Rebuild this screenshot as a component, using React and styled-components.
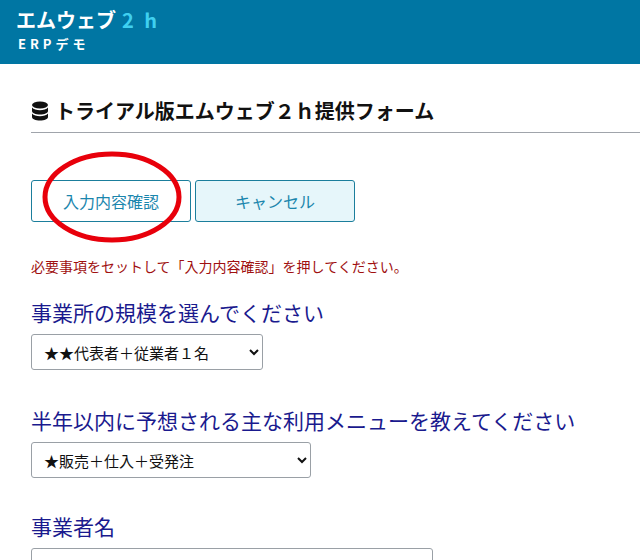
import React from "react";
import styled, { createGlobalStyle } from "styled-components";

const G = createGlobalStyle`
  body { margin:0; font-family: "Noto Sans CJK JP", "Liberation Sans", sans-serif; background:#fff; overflow:hidden; }
`;
const Header = styled.header`
  background:#0076a3; height:64px; padding:6px 16px 0; box-sizing:border-box; color:#fff;
`;
const Title = styled.div`font-size:20px; font-weight:700; line-height:28px;`;
const Cyan = styled.span`color:#3fd0f0; margin-left:6px; letter-spacing:3px;`;
const Sub = styled.div`font-size:13px; font-weight:700; letter-spacing:4px; line-height:20px; margin-left:2px;`;
const Main = styled.main`padding:34px 0 0 31px; position:relative;`;
const H = styled.h2`
  margin:0; font-size:20px; font-weight:700; display:flex; align-items:center; gap:6px;
  padding-bottom:8px; border-bottom:1px solid #a0a4ab; color:#111; line-height:26px;
`;
const Buttons = styled.div`display:flex; gap:4px; margin-top:47px;`;
const Btn = styled.button`
  width:160px; height:42px; border:1px solid #1b7e9c; border-radius:3px;
  background:${p => p.$fill ? "#e6f6fa" : "#fff"}; color:#1b86ad; font-size:16px;
  font-family:inherit; padding:0;
`;
const Note = styled.p`margin:35px 0 0; font-size:14px; color:#a01010; line-height:18px;`;
const Label = styled.div`font-size:21px; color:#1a1a8e; margin-top:${p => p.$mt}px; line-height:28px;`;
const Select = styled.select`
  display:block; width:${p => p.$w}px; height:36px; margin-top:8px; font-size:15px; color:#111;
  border:1px solid #9aa0a6; border-radius:3px; background:#fff; font-family:inherit; padding:0 8px;
`;
const Input = styled.div`width:400px; height:30px; border:1px solid #9aa0a6; border-radius:3px; margin-top:8px;`;
const Ring = styled.svg`position:absolute; left:40px; top:85px; pointer-events:none;`;

export default function App() {
  return (
    <>
      <G />
      <Header>
        <Title>エムウェブ<Cyan>2 h</Cyan></Title>
        <Sub>ERPデモ</Sub>
      </Header>
      <Main>
        <H>
          <svg width="18" height="20" viewBox="0 0 18 20">
            <ellipse cx="9" cy="4" rx="8" ry="3.5" fill="#111" />
            <path d="M1 6.5v3.5c0 2 3.6 3.5 8 3.5s8-1.5 8-3.5V6.5c-1.5 1.8-4.6 2.8-8 2.8s-6.5-1-8-2.8z" fill="#111" />
            <path d="M1 12.5v3.5c0 2 3.6 3.5 8 3.5s8-1.5 8-3.5v-3.5c-1.5 1.8-4.6 2.8-8 2.8s-6.5-1-8-2.8z" fill="#111" />
          </svg>
          トライアル版エムウェブ２ｈ提供フォーム
        </H>
        <Buttons>
          <Btn>入力内容確認</Btn>
          <Btn $fill>キャンセル</Btn>
        </Buttons>
        <Note>必要事項をセットして「入力内容確認」を押してください。</Note>
        <Label $mt={23}>事業所の規模を選んでください</Label>
        <Select $w={232}><option>★★代表者＋従業者１名</option></Select>
        <Label $mt={36}>半年以内に予想される主な利用メニューを教えてください</Label>
        <Select $w={280}><option>★販売＋仕入＋受発注</option></Select>
        <Label $mt={34}>事業者名</Label>
        <Input />
        <Ring width="150" height="100" viewBox="0 0 150 100">
          <ellipse cx="72" cy="48" rx="67" ry="43" fill="none" stroke="#e8000b" strokeWidth="5" />
        </Ring>
      </Main>
    </>
  );
}
